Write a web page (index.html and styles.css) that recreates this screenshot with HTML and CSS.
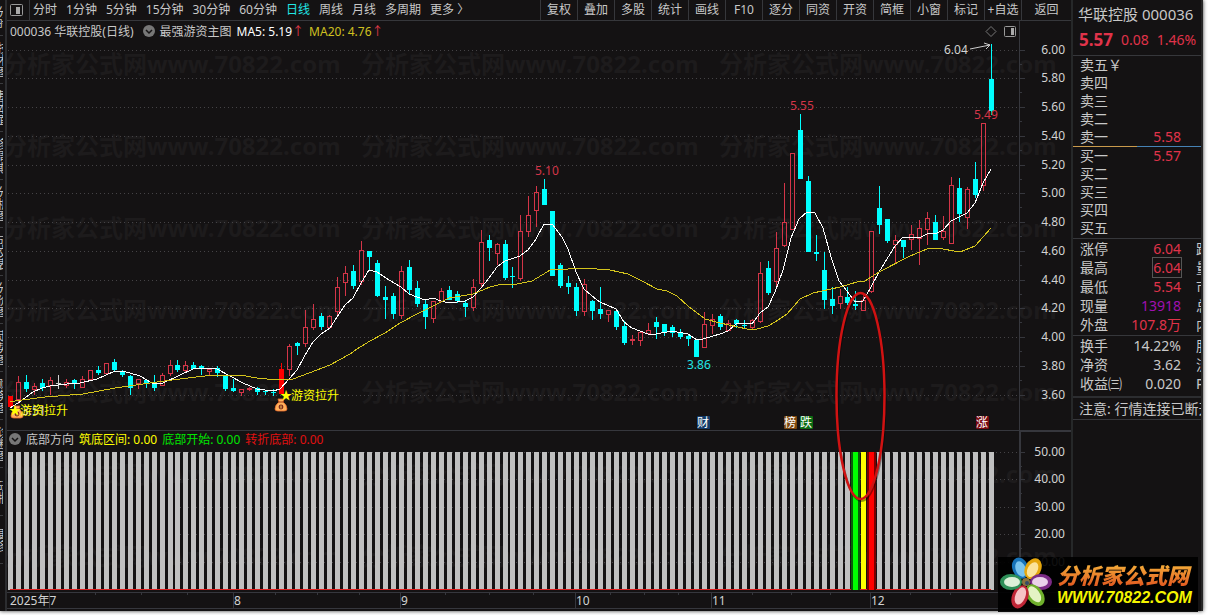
FILE: index.html
```html
<!DOCTYPE html>
<html lang="zh-CN">
<head>
    <meta charset="UTF-8">
    <meta name="viewport" content="width=device-width, initial-scale=1.0">
    <title>华联控股 000036</title>
    <link rel="stylesheet" href="styles.css">
</head>
<body>
    <div class="window">
        <!-- Side tabs -->
        <nav class="side-tabs">
            <button>分时</button>
            <button>技术图</button>
            <button>基本面</button>
            <button>多周期</button>
            <button>分析图</button>
            <button>成交表</button>
            <button>分价图</button>
            <button>走势图</button>
            <button>财务图</button>
            <button>诊断图</button>
            <button>研报</button>
            <button>更多</button>
        </nav>

        <main class="main">
            <!-- Toolbar -->
            <div class="toolbar">
                <button class="layout-btn" aria-label="布局">
                    <svg width="13" height="12" viewBox="0 0 13 12">
                        <rect x="0.5" y="0.5" width="12" height="11" rx="1" fill="none" stroke="#999"/>
                        <rect x="6" y="3" width="4" height="7" fill="#aaa"/>
                    </svg>
                </button>
                <div class="periods">
                    <button>分时</button>
                    <button>1分钟</button>
                    <button>5分钟</button>
                    <button>15分钟</button>
                    <button>30分钟</button>
                    <button>60分钟</button>
                    <button class="active">日线</button>
                    <button>周线</button>
                    <button>月线</button>
                    <button>多周期</button>
                    <button>更多 〉</button>
                </div>
                <div class="tools">
                    <button>复权</button>
                    <button>叠加</button>
                    <button>多股</button>
                    <button>统计</button>
                    <button>画线</button>
                    <button>F10</button>
                    <button>逐分</button>
                    <button>同资</button>
                    <button>开资</button>
                    <button>简框</button>
                    <button>小窗</button>
                    <button>标记</button>
                    <button>+自选</button>
                    <button class="back">返回</button>
                </div>
            </div>

            <!-- Candle chart -->
            <section class="pane">
                <div class="pane-title">
                    <span class="stock">000036 华联控股(日线)</span>
                    <svg width="12" height="12" viewBox="0 0 12 12">
                        <circle cx="6" cy="6" r="6" fill="#777"/>
                        <path d="M3 5l3 3 3-3" fill="none" stroke="#161415" stroke-width="1.5"/>
                    </svg>
                    <span>最强游资主图</span>
                    <span class="ma5">MA5: 5.19<i class="up">↑</i></span>
                    <span class="ma20">MA20: 4.76<i class="up">↑</i></span>
                </div>
                <svg id="priceChart" class="chart" viewBox="7 21 1064 409"></svg>
            </section>

            <!-- Indicator chart -->
            <section class="pane pane-sub">
                <div class="pane-title">
                    <svg width="12" height="12" viewBox="0 0 12 12">
                        <circle cx="6" cy="6" r="6" fill="#777"/>
                        <path d="M3 5l3 3 3-3" fill="none" stroke="#161415" stroke-width="1.5"/>
                    </svg>
                    <span>底部方向</span>
                    <span class="yellow">筑底区间: 0.00</span>
                    <span class="green">底部开始: 0.00</span>
                    <span class="red">转折底部: 0.00</span>
                </div>
                <svg id="signalChart" class="chart" viewBox="7 430 1064 181"></svg>
            </section>
        </main>

        <!-- Quote panel -->
        <aside class="quote">
            <h1>华联控股 000036</h1>
            <div class="price"><b>5.57</b><span>0.08</span><span>1.46%</span></div>
            <table class="book">
                <tr><th>卖五￥</th><td></td></tr>
                <tr><th>卖四</th><td></td></tr>
                <tr><th>卖三</th><td></td></tr>
                <tr><th>卖二</th><td></td></tr>
                <tr><th>卖一</th><td>5.58</td></tr>
            </table>
            <div class="ratio"></div>
            <table class="book">
                <tr><th>买一</th><td>5.57</td></tr>
                <tr><th>买二</th><td></td></tr>
                <tr><th>买三</th><td></td></tr>
                <tr><th>买四</th><td></td></tr>
                <tr><th>买五</th><td></td></tr>
            </table>
            <table class="stats">
                <tr><th>涨停</th><td class="rise">6.04</td><td class="more">跌停</td></tr>
                <tr><th>最高</th><td class="rise"><span class="boxed">6.04</span></td><td class="more">量比</td></tr>
                <tr><th>最低</th><td class="rise">5.54</td><td class="more">市值</td></tr>
                <tr><th>现量</th><td class="volume">13918</td><td class="more">总量</td></tr>
                <tr><th>外盘</th><td class="rise">107.8万</td><td class="more">内盘</td></tr>
            </table>
            <table class="stats">
                <tr><th>换手</th><td>14.22%</td><td class="more">股本</td></tr>
                <tr><th>净资</th><td>3.62</td><td class="more">流通</td></tr>
                <tr><th>收益㈢</th><td>0.020</td><td class="more">PE</td></tr>
            </table>
            <p class="notice">注意: 行情连接已断开</p>
        </aside>

        <!-- Site logo -->
        <a class="logo" href="#">
            <svg width="56" height="55" viewBox="0 0 56 55">
                <g transform="translate(28 25)">
                    <g transform="rotate(-22)"><ellipse cy="-15" rx="8" ry="11" fill="#1672b8"/><ellipse cy="-14" rx="5" ry="8" fill="#79c4ee"/></g>
                    <g transform="rotate(28)"><ellipse cy="-15" rx="8" ry="11" fill="#e5a60c"/><ellipse cy="-14" rx="5" ry="8" fill="#fbe39a"/></g>
                    <g transform="rotate(90)"><ellipse cy="-15" rx="8" ry="11" fill="#7b2a86"/><ellipse cy="-14" rx="5" ry="8" fill="#ead2ea"/></g>
                    <g transform="rotate(145)"><ellipse cy="-16" rx="8" ry="12" fill="#6fb02c"/><ellipse cy="-15" rx="5" ry="9" fill="#e4f3c4"/></g>
                    <g transform="rotate(202)"><ellipse cy="-16" rx="8" ry="12" fill="#c02637"/><ellipse cy="-15" rx="5" ry="9" fill="#f6c3c6"/></g>
                    <g transform="rotate(270)"><ellipse cy="-15" rx="8" ry="11" fill="#2e8f58"/><ellipse cy="-14" rx="5" ry="8" fill="#dcf0d8"/></g>
                    <circle r="4" fill="#8a7340"/>
                    <circle cx="1" cy="1" r="2" fill="#334c66"/>
                </g>
            </svg>
            <span class="logo-text">
                <span class="logo-name">分析家公式网</span>
                <span class="logo-url">WWW.70822.COM</span>
            </span>
        </a>
    </div>
    <script src="chart.js"></script>
</body>
</html>
```
FILE: styles.css
```css
* {
    box-sizing: border-box;
    margin: 0;
    padding: 0;
}

body {
    font-family: "Noto Sans", "Noto Sans CJK SC", sans-serif;
    font-size: 12px;
    color: #c8c8c8;
    background: #fff;
}

button {
    font: inherit;
    color: inherit;
    background: none;
    border: none;
    white-space: nowrap;
    cursor: pointer;
}

.window {
    position: relative;
    display: flex;
    margin: 0 5px 4px 0;
    background: #141213;
    box-shadow: 0 0 4px rgba(0, 0, 0, 0.8);
}

/* Side tabs, mostly scrolled out of view */
.side-tabs {
    width: 7px;
    flex: none;
    overflow: hidden;
    border-right: 2px solid #2c2d30;
}

.side-tabs button {
    display: flex;
    align-items: center;
    justify-content: center;
    width: 3px;
    height: 48px;
    overflow: hidden;
    writing-mode: vertical-rl;
    line-height: 12px;
    border-bottom: 1px solid #3a3b3e;
}

.side-tabs button:first-child {
    height: 36px;
}

/* Main area */
.main {
    flex: 1;
    min-width: 0;
}

.toolbar {
    display: flex;
    height: 21px;
    line-height: 20px;
    border-bottom: 1px solid #36373b;
}

.layout-btn {
    display: flex;
    align-items: center;
    width: 23px;
    padding-left: 3px;
    border-right: 1px solid #36373b;
}

.periods {
    display: flex;
    gap: 9px;
    padding-left: 3px;
}

.periods .active {
    color: #21e6e6;
}

.tools {
    display: flex;
    margin-left: auto;
}

.tools button {
    width: 37px;
    border-left: 1px solid #36373b;
}

.tools .back {
    width: 50px;
}

/* Chart panes */
.pane {
    position: relative;
}

.pane-title {
    position: absolute;
    top: 0;
    left: 3px;
    display: flex;
    align-items: center;
    gap: 5px;
    height: 20px;
    white-space: nowrap;
}

.pane-sub .pane-title {
    left: 2px;
    height: 18px;
}

.stock {
    margin-right: 4px;
}

.ma5 {
    color: #fff;
}

.ma20 {
    color: #d0c020;
}

.up {
    font-style: normal;
    color: #e0394a;
}

.yellow {
    color: #ffff00;
}

.green {
    color: #00e600;
}

.red {
    color: #e01010;
}

.chart {
    display: block;
    width: 100%;
    height: auto;
}

.watermark {
    font-size: 24px;
    font-weight: bold;
    fill: #1d1b1c;
}

.grid {
    stroke: #454346;
    stroke-dasharray: 1 3;
    shape-rendering: crispEdges;
}

.axis {
    stroke: #36373d;
    fill: none;
    shape-rendering: crispEdges;
}

.label {
    font-size: 12px;
    fill: #d2d2d2;
}

.end {
    text-anchor: end;
}

.middle {
    text-anchor: middle;
}

.crisp {
    shape-rendering: crispEdges;
}

.line {
    fill: none;
    stroke-width: 1;
}

/* Quote panel */
.quote {
    width: 132px;
    flex: none;
    overflow: hidden;
    border-left: 2px solid #262829;
    border-right: 2px solid #262626;
    font-size: 14px;
}

.quote h1 {
    height: 28px;
    padding-left: 5px;
    font-size: 15px;
    font-weight: normal;
    line-height: 29px;
    white-space: nowrap;
}

.price {
    display: flex;
    align-items: center;
    gap: 8px;
    height: 28px;
    padding: 0 0 4px 6px;
    color: #e0334a;
    border-bottom: 1px solid #36373b;
}

.price b {
    font-size: 17px;
}

.quote table {
    width: 100%;
    table-layout: fixed;
    border-collapse: collapse;
    line-height: 18px;
}

.quote tr {
    height: 18px;
}

.quote th {
    width: 56px;
    padding-left: 7px;
    font-weight: normal;
    text-align: left;
    white-space: nowrap;
}

.quote td {
    text-align: right;
    white-space: nowrap;
}

.book td {
    padding-right: 20px;
    color: #e0334a;
}

.ratio {
    height: 1px;
    background: linear-gradient(to right, #c99a4c 50%, #4682b4 50%);
}

.quote .stats {
    margin-top: 1px;
    border-collapse: separate;
    border-spacing: 0;
    border-top: 1px solid #36373b;
}

.quote .stats tr {
    height: 19px;
}

.quote .stats td,
.quote .stats th {
    padding-top: 1px;
}

.quote .more {
    width: 20px;
    padding-left: 15px;
    overflow: hidden;
    text-align: left;
}

.rise {
    color: #e0334a;
}

.volume {
    color: #a010b0;
}

.boxed {
    outline: 1px solid #555;
}

.notice {
    height: 24px;
    margin-top: 3px;
    padding-left: 6px;
    line-height: 22px;
    white-space: nowrap;
    border-top: 2px solid #2c2d30;
    border-bottom: 1px solid #36373b;
}

/* Logo over the bottom right corner */
.logo {
    position: absolute;
    right: 5px;
    bottom: -1px;
    display: flex;
    width: 200px;
    height: 55px;
    background: rgba(0, 0, 0, 0.92);
    text-decoration: none;
}

.logo-text {
    display: flex;
    flex-direction: column;
    padding: 5px 0 0 3px;
    white-space: nowrap;
}

.logo-name {
    font-size: 22px;
    font-weight: 900;
    font-style: italic;
    line-height: 26px;
    color: transparent;
    background: linear-gradient(#f6b73c, #e0521e);
    background-clip: text;
    -webkit-background-clip: text;
}

.logo-url {
    font-family: "Liberation Sans", sans-serif;
    font-size: 16px;
    font-weight: bold;
    font-style: italic;
    line-height: 20px;
    color: #f4f400;
}
```
FILE: chart.js
```js
const RED = '#d43548';
const CYAN = '#00ffff';
const STEP = 7.976;

// kind, high, body top, body bottom, low (chart units)
// r = hollow rise, c = fall, s = signal day, w = flat
const candles = [
    ['s', 396, 396, 407, 407], ['r', 376, 382, 399, 404], ['c', 375, 382, 389, 392], ['r', 383, 386, 389, 395],
    ['c', 379, 383, 388, 391], ['r', 377, 380, 385, 395], ['w', 375, 383, 384, 389], ['r', 379, 382, 385, 388],
    ['c', 379, 380, 384, 389], ['r', 376, 379, 387, 387], ['r', 370, 370, 379, 381], ['c', 366, 370, 373, 375],
    ['r', 363, 363, 373, 373], ['c', 359, 362, 370, 371], ['c', 370, 371, 375, 377], ['c', 375, 376, 388, 395],
    ['r', 379, 379, 383, 389], ['c', 379, 380, 383, 388], ['c', 375, 384, 388, 391], ['r', 373, 375, 385, 385],
    ['r', 360, 365, 373, 376], ['c', 360, 365, 370, 372], ['r', 361, 365, 370, 373], ['c', 362, 365, 369, 369],
    ['c', 365, 366, 369, 375], ['r', 368, 369, 371, 375], ['c', 366, 368, 373, 377], ['c', 375, 376, 389, 391],
    ['c', 379, 388, 391, 392], ['r', 389, 389, 392, 396], ['r', 387, 388, 389, 391], ['c', 387, 388, 392, 395],
    ['c', 390, 391, 392, 395], ['c', 389, 392, 393, 396], ['s', 363, 369, 394, 394], ['r', 344, 346, 369, 376],
    ['c', 342, 343, 346, 355], ['r', 310, 327, 343, 347], ['r', 304, 319, 327, 330], ['c', 313, 316, 327, 330],
    ['r', 315, 316, 327, 329], ['r', 277, 287, 311, 315], ['r', 266, 273, 282, 296], ['c', 265, 271, 286, 289],
    ['r', 241, 250, 281, 285], ['c', 251, 251, 257, 270], ['c', 260, 263, 296, 297], ['c', 286, 297, 300, 319],
    ['c', 293, 296, 314, 319], ['r', 266, 271, 315, 319], ['c', 260, 267, 290, 294], ['c', 281, 288, 304, 307],
    ['c', 299, 304, 317, 329], ['r', 301, 301, 318, 323], ['r', 288, 291, 301, 302], ['c', 286, 290, 300, 300],
    ['c', 291, 294, 301, 303], ['c', 301, 303, 307, 317], ['r', 279, 287, 307, 311], ['r', 230, 242, 283, 287],
    ['c', 235, 240, 248, 261], ['r', 243, 244, 253, 265], ['c', 240, 244, 278, 280], ['c', 267, 276, 277, 288],
    ['r', 215, 231, 278, 281], ['r', 196, 215, 231, 237], ['r', 186, 192, 210, 227], ['c', 179, 189, 205, 205],
    ['c', 211, 211, 276, 276], ['c', 263, 265, 286, 288], ['c', 276, 283, 287, 294], ['c', 283, 287, 311, 316],
    ['r', 279, 284, 311, 316], ['c', 300, 301, 311, 320], ['c', 287, 309, 314, 319], ['r', 310, 310, 314, 322],
    ['c', 310, 311, 327, 330], ['c', 321, 326, 343, 345], ['r', 335, 339, 340, 345], ['r', 332, 332, 340, 346],
    ['r', 323, 330, 333, 334], ['c', 317, 322, 327, 339], ['c', 324, 324, 333, 336], ['c', 325, 327, 333, 337],
    ['c', 329, 332, 337, 339], ['c', 334, 336, 339, 346], ['c', 340, 340, 357, 357], ['r', 312, 324, 347, 347],
    ['r', 314, 319, 325, 334], ['c', 314, 316, 327, 330], ['r', 320, 323, 330, 331], ['c', 319, 320, 324, 328],
    ['c', 320, 325, 326, 329], ['r', 319, 320, 327, 329], ['r', 262, 273, 321, 323], ['c', 261, 268, 293, 295],
    ['r', 232, 248, 281, 287], ['r', 183, 222, 245, 247], ['r', 153, 153, 229, 229], ['c', 114, 130, 179, 179],
    ['c', 176, 181, 252, 252], ['c', 235, 252, 254, 261], ['c', 252, 270, 300, 309], ['c', 287, 299, 306, 314],
    ['r', 289, 296, 303, 309], ['c', 287, 297, 303, 305], ['c', 291, 304, 306, 310], ['r', 293, 300, 310, 310],
    ['r', 231, 231, 291, 293], ['c', 186, 208, 225, 234], ['c', 219, 219, 241, 243], ['r', 235, 240, 244, 263],
    ['c', 240, 240, 247, 258], ['r', 225, 234, 239, 250], ['r', 220, 228, 238, 265], ['r', 212, 218, 229, 245],
    ['c', 215, 222, 240, 240], ['r', 216, 231, 237, 240], ['r', 177, 185, 243, 243], ['c', 178, 188, 214, 222],
    ['r', 187, 189, 217, 229], ['c', 162, 179, 195, 198], ['r', 123, 123, 185, 191], ['c', 44, 79, 111, 115]
];

const ma5 = '10,408 21,401 33,392 42,388 50,386 67,384 80,383 97,379 115,371 123,371 140,376 152,383 163,383 178,376 193,369 203,368 217,369 230,376 243,383 257,389 273,391 280,389 289,379 297,370 304,357 313,342 321,334 330,328 337,317 345,305 353,298 361,283 369,270 377,272 389,280 401,287 409,294 417,297 425,300 433,298 441,301 449,303 465,301 473,297 481,288 489,278 497,267 505,261 520,256 528,250 536,239 544,224 552,224 562,237 568,249 576,272 584,289 592,296 600,302 616,309 624,322 632,328 648,334 656,334 672,331 688,334 697,340 703,339 720,334 728,331 737,323 752,324 760,313 768,307 775,292 783,270 791,238 799,219 807,212 815,213 823,228 831,257 839,281 847,291 855,302 863,301 871,287 879,272 887,259 895,246 903,237 919,238 927,234 937,233 943,230 951,221 967,213 975,203 983,183 991,169';
const ma20 = '10,402 15,401 45,397 83,394 115,388 150,383 180,379 213,375 240,375 257,378 277,380 293,379 317,370 330,365 350,354 357,349 370,341 385,333 400,323 417,314 433,306 449,298 473,294 490,287 498,285 517,284 532,281 547,272 552,269 568,269 584,268 610,270 628,274 642,281 657,289 667,291 677,296 688,306 705,319 720,323 747,329 757,329 768,326 775,322 787,314 800,299 813,293 840,287 857,282 865,281 879,272 910,256 927,249 937,248 960,252 975,246 991,228';

function rect(x, y, w, h, fill) {
    return `<rect class="crisp" x="${x}" y="${y}" width="${w}" height="${h}" fill="${fill}"/>`;
}

function text(x, y, value, cls = '', fill = '') {
    const style = fill ? ` style="fill:${fill}"` : '';
    return `<text class="label ${cls}" x="${x}" y="${y}"${style}>${value}</text>`;
}

// Only the rows that fall inside the pane
function watermark(first, last) {
    let out = '';
    for (let row = first; row <= last; row++) {
        for (let col = 0; col < 3; col++) {
            out += `<text class="watermark" x="${3 + col * 358}" y="${73 + row * 82}">分析家公式网www.70822.com</text>`;
        }
    }
    return out;
}

function candle([kind, high, top, bottom, low], i) {
    const x = Math.round(8 + STEP * i);
    if (kind === 'r') {
        const h = Math.max(bottom - top, 1);
        return rect(x + 2, high, 1, top - high, RED) + rect(x + 2, bottom, 1, low - bottom, RED)
            + `<rect class="crisp" x="${x + 0.5}" y="${top + 0.5}" width="4" height="${h}" fill="none" stroke="${RED}"/>`;
    }
    const color = { c: CYAN, s: '#ff0000', w: '#d0d0d0' }[kind];
    return rect(x + 2, high, 1, low - high, color) + rect(x, top, 5, bottom - top, color);
}

// Money bag under a signal day
function bag(x, y) {
    return `<g transform="translate(${x} ${y})">
        <path d="M-3 -6L3 -6L2 -3Q6 0 6 4Q6 6 3 6L-3 6Q-6 6 -6 4Q-6 0 -2 -3Z" fill="#ffb05c" stroke="#e86a2a" stroke-width="0.8"/>
        <path d="M-3 -3H3" stroke="#a03c14"/>
        <circle cy="2" r="2.4" fill="#7c2a1c"/>
        <path d="M0 0.5V3.5" stroke="#ffd060"/>
    </g>`;
}

function badge(x, y, value, fill) {
    return `<rect x="${x}" y="${y}" width="13" height="13" rx="1" fill="${fill}"/>` + text(x + 6, y + 11, value, 'middle', '#fff');
}

function ellipse() {
    return `<ellipse cx="861.5" cy="398" rx="24" ry="103" fill="none" stroke="#000" stroke-opacity="0.4" stroke-width="2"/>
        <ellipse cx="860.5" cy="396" rx="24" ry="103" fill="none" stroke="#d01212" stroke-width="2.5"/>`;
}

function drawPrice() {
    let out = watermark(0, 4);
    for (let i = 0; i <= 12; i++) {
        const y = Math.floor(50 + i * 28.75) + 0.5;
        out += `<path class="grid" d="M8 ${y}H1019"/><path class="axis" d="M1020 ${y}h5"/>`;
        if (i < 12) out += `<path class="axis" d="M1020 ${y + 14}h2"/>`;
        out += text(1065, y + 3.5, (6 - i * 0.2).toFixed(2), 'end');
    }
    out += '<path class="axis" d="M1019.5 21V430"/>';
    out += candles.map(candle).join('');
    out += `<polyline class="line crisp" stroke="#fff" points="${ma5}"/>`;
    out += `<polyline class="line crisp" stroke="#d4c41c" points="${ma20}"/>`;

    out += text(944, 54, '6.04') + '<path d="M970 49L990 45M984 43L990 45L986 49" fill="none" stroke="#ccc"/>';
    out += text(790, 110, '5.55', '', RED) + text(535, 175, '5.10', '', RED) + text(974, 119, '5.49', '', RED);
    out += text(687, 369, '3.86', '', '#21e6e6');

    out += bag(17, 412) + text(22, 415, '3.51') + text(9, 415, '★', '', '#ff0') + text(20, 415, '游资拉升', '', '#ff0');
    out += bag(281, 405) + text(280, 400, '★', '', '#ff0') + text(291, 400, '游资拉升', '', '#ff0');

    out += badge(697, 416, '财', '#123a68') + badge(784, 416, '榜', '#7c4810');
    out += badge(800, 416, '跌', '#0c6c14') + badge(976, 416, '涨', '#780a10');

    out += '<path d="M991 26.5L996 31.5L991 36.5L986 31.5Z" fill="none" stroke="#777"/>';
    out += '<rect x="1004.5" y="26.5" width="11" height="10" rx="1" fill="none" stroke="#999"/>' + rect(1011, 28, 3, 7, '#aaa');
    out += ellipse();
    document.getElementById('priceChart').innerHTML = out;
}

function drawSignal() {
    let out = watermark(5, 6);
    out += '<path class="axis" d="M7 430.5H1071M1019 431.5H1071M1020.5 431V611M1019.5 431V592"/>';
    for (let i = 0; i < 5; i++) {
        const y = Math.floor(452 + i * 27.5) + 0.5;
        out += `<path class="grid" d="M8 ${y}H1019"/><path class="axis" d="M1020 ${y}h5M1020 ${y + 14}h2"/>`;
        out += text(1065, y + 3.5, (50 - i * 10) + '.00', 'end');
    }
    for (let i = 0; i < candles.length; i++) {
        out += rect(Math.round(8 + STEP * i), 452, 5, 138, '#c0c0c0');
    }
    out += rect(10, 589, 981, 1, '#e02020');
    // Signal days: start, base, turn
    out += rect(851, 452, 9, 138, '#0a5a0a') + rect(853, 452, 5, 138, '#00ff00');
    out += rect(861, 452, 5, 137, '#ffff00');
    out += rect(867, 452, 9, 138, '#7a0000') + rect(869, 452, 5, 138, '#ff0000');
    out += ellipse();

    out += '<path class="axis" d="M7 592.5H1071M7 608.5H1071"/>';
    const months = [[10, '2025年7'], [234, '8'], [401, '9'], [576, '10'], [712, '11'], [871, '12']];
    months.forEach(([x, name], i) => {
        out += `<path class="axis" d="M${i ? x - 0.5 : 49.5} 592V608"/>` + text(x, 605, name);
    });
    [95, 141, 187, 275, 317, 359, 445, 489, 533, 610, 644, 678, 752, 791, 830, 910, 950].forEach(x => {
        out += `<path class="axis" d="M${x + 0.5} 592v3"/>`;
    });
    document.getElementById('signalChart').innerHTML = out;
}

drawPrice();
drawSignal();
```
